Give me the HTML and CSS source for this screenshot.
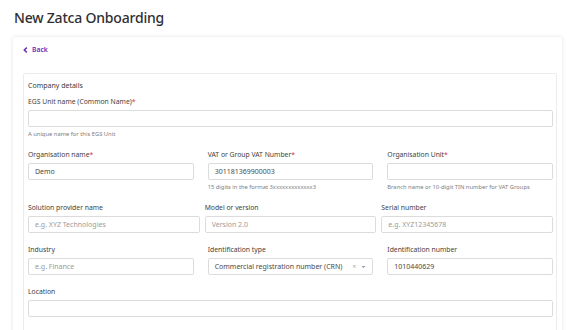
FILE: index.html
```html
<!DOCTYPE html>
<html>
<head>
<meta charset="utf-8">
<link rel="stylesheet" href="styles.css">
</head>
<body>
<h1 class="title">New Zatca Onboarding</h1>
<div class="card">
  <a class="back" href="#"><svg class="chev" width="5" height="6" viewBox="0 0 5 6"><path d="M3.8 0.6 L1.3 3 L3.8 5.4" fill="none" stroke="currentColor" stroke-width="1.5"/></svg>Back</a>
  <div class="panel">
    <div class="section">Company details</div>
    <div class="field">
      <label class="label">EGS Unit name (Common Name)<span class="req">*</span></label>
      <div class="input"></div>
      <div class="help">A unique name for this EGS Unit</div>
    </div>
    <div class="row">
      <div class="field">
        <label class="label">Organisation name<span class="req">*</span></label>
        <div class="input val">Demo</div>
      </div>
      <div class="field">
        <label class="label">VAT or Group VAT Number<span class="req">*</span></label>
        <div class="input val">301181369900003</div>
        <div class="help">15 digits in the format 3xxxxxxxxxxxxx3</div>
      </div>
      <div class="field">
        <label class="label">Organisation Unit<span class="req">*</span></label>
        <div class="input"></div>
        <div class="help">Branch name or 10-digit TIN number for VAT Groups</div>
      </div>
    </div>
    <div class="row tight">
      <div class="field">
        <label class="label">Solution provider name</label>
        <div class="input ph">e.g. XYZ Technologies</div>
      </div>
      <div class="field">
        <label class="label">Model or version</label>
        <div class="input ph">Version 2.0</div>
      </div>
      <div class="field">
        <label class="label">Serial number</label>
        <div class="input ph">e.g. XYZ12345678</div>
      </div>
    </div>
    <div class="row">
      <div class="field">
        <label class="label">Industry</label>
        <div class="input ph">e.g. Finance</div>
      </div>
      <div class="field">
        <label class="label">Identification type</label>
        <div class="input val select"><span class="sel-text">Commercial registration number (CRN)</span><span class="sel-ctrls"><span class="clear">×</span><svg width="5" height="4" viewBox="0 0 5 4"><path d="M0.5 1 L2.5 3 L4.5 1 Z" fill="#999"/></svg></span></div>
      </div>
      <div class="field">
        <label class="label">Identification number</label>
        <div class="input val">1010440629</div>
      </div>
    </div>
    <div class="field">
      <label class="label">Location</label>
      <div class="input"></div>
    </div>
  </div>
</div>
</body>
</html>
```

FILE: styles.css
```css
html, body {
  margin: 0;
  padding: 0;
  background: #ffffff;
  font-family: "Noto Sans", "DejaVu Sans", sans-serif;
  color: #3a3a3a;
  overflow: hidden;
}
.title {
  margin: 0;
  padding: 9px 0 0 14px;
  height: 28px;
  box-sizing: border-box;
  font-size: 14px;
  line-height: 18px;
  font-weight: 500;
  color: #2f2f33;
  letter-spacing: -0.2px;
}
.card {
  margin: 9px 5px 0 13px;
  padding: 8px 5px 0 10px;
  background: #fff;
  border-radius: 3px;
  box-shadow: 0 0 4px rgba(0,0,0,0.12);
  height: 400px;
  box-sizing: border-box;
}
.back {
  display: flex;
  width: fit-content;
  align-items: center;
  gap: 4px;
  color: #6b2fb8;
  font-size: 6.8px;
  font-weight: 600;
  line-height: 10px;
  height: 10px;
  text-decoration: none;
}
.chev { display: block; }
.panel {
  margin-top: 18px;
  border: 1px solid #ececec;
  border-radius: 2px;
  padding: 7px 3px 20px 4px;
  display: flex;
  flex-direction: column;
  gap: 12px;
}
.section {
  font-size: 7px;
  line-height: 10px;
  color: #3a3a3a;
  margin-bottom: -6px;
}
.field {
  display: flex;
  flex-direction: column;
  min-width: 0;
}
.label {
  font-size: 6.8px;
  line-height: 10px;
  color: #3e3e3e;
  margin-bottom: 3px;
  white-space: nowrap;
}
.req { color: #d9304a; }
.input {
  height: 17px;
  box-sizing: border-box;
  border: 1px solid #dcdcdc;
  border-radius: 2px;
  padding: 0 6px;
  font-size: 7px;
  line-height: 15px;
  white-space: nowrap;
  overflow: hidden;
}
.val { color: #4a4a4a; }
.ph { color: #9a9a9a; }
.help {
  margin-top: 3px;
  font-size: 5.8px;
  line-height: 8px;
  color: #7d7d7d;
  white-space: nowrap;
}
.row {
  display: grid;
  grid-template-columns: 1fr 1fr 1fr;
  column-gap: 14px;
  align-items: start;
}
.row.tight { column-gap: 5px; }
.select {
  display: flex;
  align-items: center;
  justify-content: space-between;
}
.sel-ctrls {
  display: flex;
  align-items: center;
  gap: 5px;
  color: #aaa;
  font-size: 7px;
}
.clear { line-height: 15px; }
```
